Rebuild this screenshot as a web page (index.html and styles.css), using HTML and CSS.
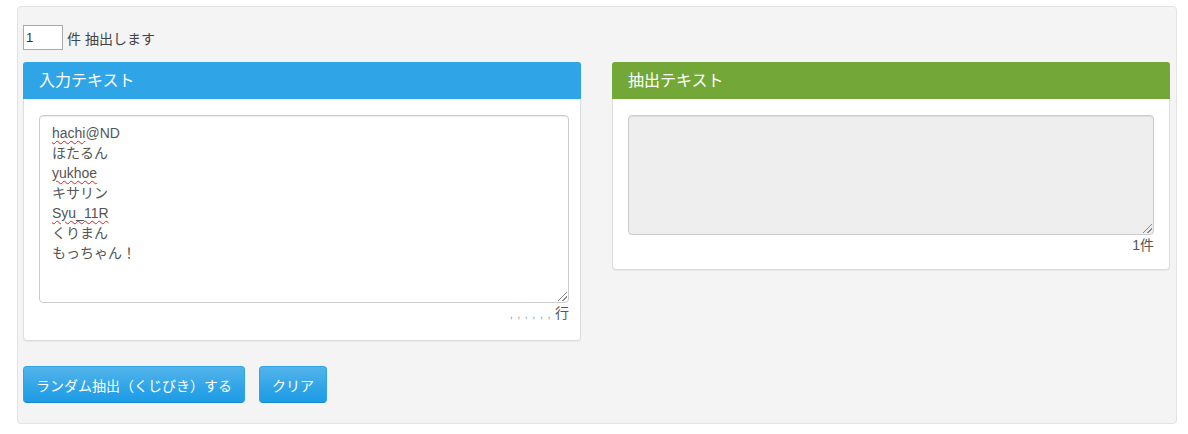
FILE: index.html
```html
<!DOCTYPE html>
<html lang="ja">
<head>
    <meta charset="UTF-8">
    <title>ランダム抽出</title>
    <link rel="stylesheet" href="styles.css">
</head>
<body>
    <div class="well">
        <div class="count-row">
            <input type="text" class="count-input" value="1">
            <span>件 抽出します</span>
        </div>
        <div class="panels">
            <div class="panel">
                <div class="panel-heading heading-blue">入力テキスト</div>
                <div class="panel-body">
                    <div class="fake-textarea tall">
                        <div><span class="typo">hachi</span>@ND</div>
                        <div>ほたるん</div>
                        <div><span class="typo">yukhoe</span></div>
                        <div>キサリン</div>
                        <div><span class="typo">Syu_11R</span></div>
                        <div>くりまん</div>
                        <div>もっちゃん！</div>
                    </div>
                    <div class="counter"><span class="commas">,,,,,,</span>行</div>
                </div>
            </div>
            <div class="panel">
                <div class="panel-heading heading-green">抽出テキスト</div>
                <div class="panel-body compact">
                    <div class="fake-textarea short disabled"></div>
                    <div class="counter">1件</div>
                </div>
            </div>
        </div>
        <div class="buttons">
            <button class="btn">ランダム抽出（くじびき）する</button>
            <button class="btn">クリア</button>
        </div>
    </div>
</body>
</html>
```
FILE: styles.css
```css
body {
    margin: 0;
    font-family: "Liberation Sans", "Noto Sans CJK JP", sans-serif;
    font-size: 14px;
    color: #555;
    background: #fff;
}

.well {
    width: 1160px;
    box-sizing: border-box;
    margin: 6px 11px 11px 17px;
    padding: 18px 6px 20px 5px;
    background: #f4f4f4;
    border: 1px solid #e3e3e3;
    border-radius: 4px;
}

.count-row {
    display: flex;
    align-items: center;
    gap: 4px;
    color: #444;
}

.count-input {
    width: 40px;
    height: 25px;
    box-sizing: border-box;
    margin: 0;
    padding: 0 2px;
    border: 1px solid #aaa;
    font-family: inherit;
    font-size: 13px;
    color: #333;
    background: #fff;
}

.panels {
    display: flex;
    justify-content: space-between;
    align-items: flex-start;
    margin-top: 12px;
}

.panel {
    width: 558px;
    background: #fff;
    border: 1px solid #ddd;
    border-radius: 4px;
    box-shadow: 0 1px 1px rgba(0, 0, 0, 0.05);
    box-sizing: border-box;
}

.panel-heading {
    height: 37px;
    box-sizing: border-box;
    margin: -1px -1px 0;
    padding: 8px 16px;
    color: #fff;
    font-size: 16px;
    line-height: 21px;
    border-radius: 3px 3px 0 0;
}

.heading-blue {
    background: #2fa4e7;
}

.heading-green {
    background: #73a839;
}

.panel-body {
    padding: 16px 15px 16px;
}

.panel-body.compact {
    padding-bottom: 14px;
}

.fake-textarea {
    position: relative;
    box-sizing: border-box;
    padding: 7px 12px;
    border: 1px solid #ccc;
    border-radius: 4px;
    background: #fff;
    box-shadow: inset 0 1px 1px rgba(0, 0, 0, 0.075);
    color: #555;
    line-height: 20px;
}

.fake-textarea::after {
    content: "";
    position: absolute;
    right: 1px;
    bottom: 1px;
    width: 9px;
    height: 9px;
    background: linear-gradient(135deg,
        transparent 0 45%, #888 45% 53%, transparent 53% 72%, #888 72% 80%, transparent 80%);
}

.tall {
    width: 530px;
    height: 188px;
}

.short {
    height: 120px;
}

.disabled {
    background: #eee;
}

.typo {
    text-decoration: underline wavy #e02020;
    text-decoration-thickness: 1px;
    text-underline-offset: 2px;
}

.counter {
    text-align: right;
    line-height: 20px;
    color: #555;
}

.tall + .counter {
    width: 530px;
}

.commas {
    color: #999;
    font-size: 11px;
    letter-spacing: 4.5px;
}

.buttons {
    display: flex;
    gap: 14px;
    margin-top: 25px;
}

.btn {
    height: 37px;
    padding: 0 12px;
    font-family: inherit;
    font-size: 14px;
    color: #fff;
    background-image: linear-gradient(#54b4eb, #2fa4e7 60%, #1d9ce5);
    border: 1px solid #2fa4e7;
    border-bottom-color: #178acc;
    border-radius: 4px;
    cursor: pointer;
}
```
